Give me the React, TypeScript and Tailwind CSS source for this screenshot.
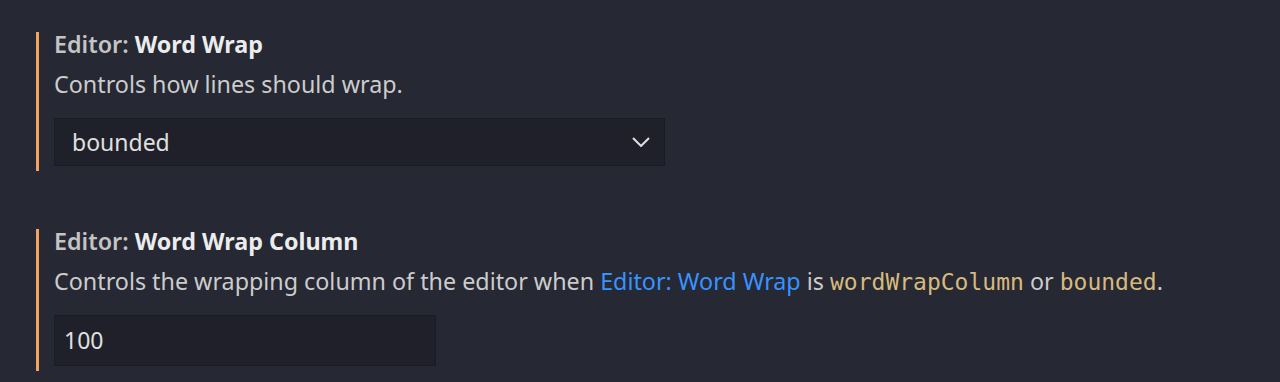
const sans = "font-['Noto_Sans','Open_Sans',sans-serif]";
const mono = "font-['DejaVu_Sans_Mono',monospace] text-[23px] text-[#d7ba7d]";

function Setting({
  category,
  name,
  children,
  control,
}: {
  category: string;
  name: string;
  children: React.ReactNode;
  control: React.ReactNode;
}) {
  return (
    <div className="border-l-[3px] border-[#f2a35e] pl-[15px] pb-[5px]">
      <div className="h-6 text-[23.3px] font-semibold leading-6 text-[#c4c4c4] whitespace-nowrap">
        {category}: <span className="font-bold text-[#ececec]">{name}</span>
      </div>
      <div className="mt-4 h-6 text-[23.3px] leading-6 text-[#cccccc] whitespace-nowrap">
        {children}
      </div>
      <div className="mt-[22px]">{control}</div>
    </div>
  );
}

export default function App() {
  return (
    <div className={`h-[382px] w-[1280px] overflow-hidden bg-[#262833] pl-9 pt-8 ${sans}`}>
      <Setting
        category="Editor"
        name="Word Wrap"
        control={
          <div className="flex h-12 w-[611px] items-center justify-between border border-[#1b1c23] bg-[#1f2029] pl-[17px] pr-[14px] text-[23px] text-[#e0e0e0]">
            <span>bounded</span>
            <svg width="18" height="10" viewBox="0 0 18 10" fill="none">
              <path d="M1 1l8 8 8-8" stroke="#e0e0e0" strokeWidth="2" />
            </svg>
          </div>
        }
      >
        Controls how lines should wrap.
      </Setting>

      <div className="mt-[58px]">
        <Setting
          category="Editor"
          name="Word Wrap Column"
          control={
            <div className="mt-[2px] flex h-[51px] w-[382px] items-center border border-[#1b1c23] bg-[#1f2029] pl-[9px] text-[23px] text-[#e0e0e0]">
              100
            </div>
          }
        >
          Controls the wrapping column of the editor when{" "}
          <span className="text-[#3794ff]">Editor: Word Wrap</span> is{" "}
          <span className={mono}>wordWrapColumn</span> or{" "}
          <span className={mono}>bounded</span>.
        </Setting>
      </div>
    </div>
  );
}
